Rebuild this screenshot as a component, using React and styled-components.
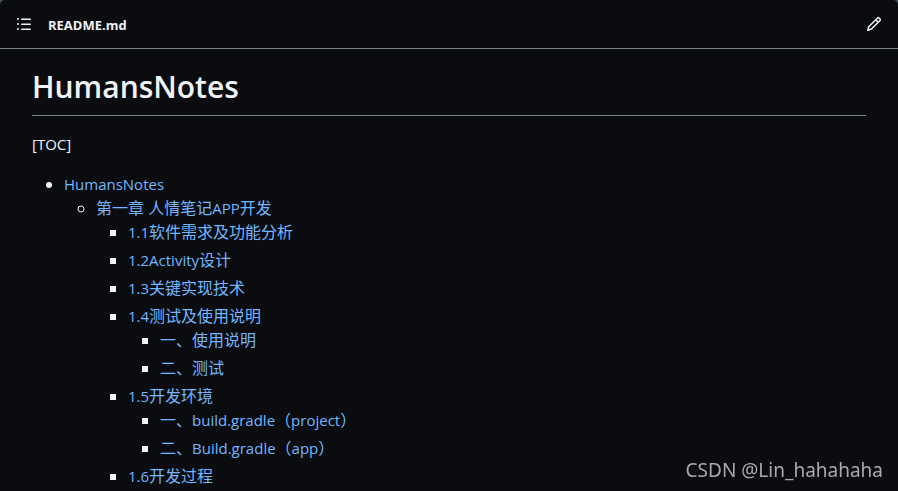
import styled, { createGlobalStyle } from 'styled-components';

const GlobalStyle = createGlobalStyle`
  body {
    margin: 0;
    background-color: #4c525b;
    color: #f0f3f6;
    font-family: 'Open Sans', 'Noto Sans CJK SC', sans-serif;
    font-size: 16px;
    line-height: 24px;
  }
`;

const Panel = styled.main`
  min-height: 100vh;
  background-color: #0a0c10;
  border-radius: 5px 5px 0 0;
`;

const Header = styled.header`
  display: flex;
  align-items: center;
  height: 48px;
  padding: 0 16px;
  border-bottom: 1px solid #7a828e;
`;

const IconButton = styled.button`
  display: flex;
  padding: 0;
  border: 0;
  background: none;
  color: inherit;
  cursor: pointer;
`;

const Icon = styled.svg.attrs({ viewBox: '0 0 16 16', 'aria-hidden': true })`
  width: 16px;
  height: 16px;
  fill: currentColor;
`;

const FileName = styled.h2`
  flex: 1;
  margin: 0 16px;
  padding-top: 2px;
  font-size: 13px;
  font-weight: 700;
`;

const Article = styled.article`
  padding: 18px 32px 0;
`;

const Title = styled.h1`
  margin: 0 0 16px;
  padding-bottom: 8px;
  border-bottom: 1px solid #7a828e;
  font-size: 30px;
  font-weight: 600;
  line-height: 40px;
`;

const Paragraph = styled.p`
  margin: 0 0 16px;
`;

const List = styled.ul`
  margin: 0;
  padding-left: 32px;
`;

const Item = styled.li`
  & + & {
    margin-top: 4px;
  }
`;

const TocLink = styled.a`
  color: #71b7ff;
  text-decoration: none;

  &:hover {
    text-decoration: underline;
  }
`;

// Latin runs are set a little smaller than the Chinese text around them
const Latin = styled.span`
  font-size: 15px;
  line-height: 1;
`;

const Watermark = styled.div`
  position: fixed;
  right: 15px;
  bottom: 7px;
  color: #a9aaab;
  font-family: 'Noto Sans', sans-serif;
  font-size: 19px;
  line-height: 28px;
`;

const toc = [
  {
    title: 'HumansNotes',
    children: [
      {
        title: '第一章 人情笔记APP开发',
        children: [
          { title: '1.1软件需求及功能分析' },
          { title: '1.2Activity设计' },
          { title: '1.3关键实现技术' },
          {
            title: '1.4测试及使用说明',
            children: [{ title: '一、使用说明' }, { title: '二、测试' }],
          },
          {
            title: '1.5开发环境',
            children: [
              { title: '一、build.gradle（project）' },
              { title: '二、Build.gradle（app）' },
            ],
          },
          { title: '1.6开发过程' },
        ],
      },
    ],
  },
];

const MixedText = ({ text }) =>
  text
    .split(/([\w.[\]]+)/)
    .map((part, i) => (i % 2 ? <Latin key={i}>{part}</Latin> : part));

const TocList = ({ items }) => (
  <List>
    {items.map(({ title, children }) => (
      <Item key={title}>
        <TocLink href={`#${title}`}>
          <MixedText text={title} />
        </TocLink>
        {children && <TocList items={children} />}
      </Item>
    ))}
  </List>
);

const ListIcon = () => (
  <Icon>
    <path d="M5.75 2.5h8.5a.75.75 0 0 1 0 1.5h-8.5a.75.75 0 0 1 0-1.5Zm0 5h8.5a.75.75 0 0 1 0 1.5h-8.5a.75.75 0 0 1 0-1.5Zm0 5h8.5a.75.75 0 0 1 0 1.5h-8.5a.75.75 0 0 1 0-1.5ZM2 14a1 1 0 1 1 0-2 1 1 0 0 1 0 2Zm1-6a1 1 0 1 1-2 0 1 1 0 0 1 2 0ZM2 4a1 1 0 1 1 0-2 1 1 0 0 1 0 2Z" />
  </Icon>
);

const PencilIcon = () => (
  <Icon>
    <path d="M11.013 1.427a1.75 1.75 0 0 1 2.474 0l1.086 1.086a1.75 1.75 0 0 1 0 2.474l-8.61 8.61c-.21.21-.47.364-.756.445l-3.251.93a.75.75 0 0 1-.927-.928l.929-3.25c.081-.286.235-.547.445-.758l8.61-8.61Zm.176 4.823L9.75 4.81l-6.286 6.287a.253.253 0 0 0-.064.108l-.558 1.953 1.953-.558a.253.253 0 0 0 .108-.064Zm1.238-3.763a.25.25 0 0 0-.354 0L10.811 3.75l1.439 1.44 1.263-1.263a.25.25 0 0 0 0-.354Z" />
  </Icon>
);

const App = () => {
  return (
    <>
      <GlobalStyle />
      <Panel lang="zh-CN">
        <Header>
          <IconButton type="button" aria-label="Outline">
            <ListIcon />
          </IconButton>
          <FileName>README.md</FileName>
          <IconButton type="button" aria-label="Edit file">
            <PencilIcon />
          </IconButton>
        </Header>
        <Article>
          <Title>HumansNotes</Title>
          <Paragraph>
            <MixedText text="[TOC]" />
          </Paragraph>
          <TocList items={toc} />
        </Article>
      </Panel>
      <Watermark>CSDN @Lin_hahahaha</Watermark>
    </>
  );
};

export default App;
